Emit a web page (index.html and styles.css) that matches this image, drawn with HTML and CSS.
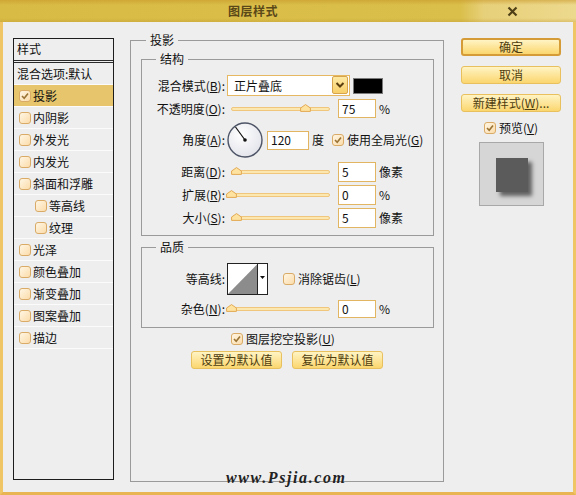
FILE: index.html
```html
<!DOCTYPE html>
<html lang="zh-CN">
<head>
<meta charset="utf-8">
<title>图层样式</title>
<link rel="stylesheet" href="styles.css">
</head>
<body>
<div class="win">
  <div class="titlebar">
    <div class="title">图层样式</div>
    <svg class="close" width="11" height="11" viewBox="0 0 11 11"><path d="M1.5 1.5 L9.5 9.5 M9.5 1.5 L1.5 9.5" stroke="#4e3f16" stroke-width="2.2" fill="none"/></svg>
  </div>
  <div class="frame">
    <div class="list">
      <div class="list-head">样式</div>
      <div class="item plain">混合选项:默认</div>
      <div class="item sel"><span class="cb on"><svg width="10" height="10" viewBox="0 0 10 10"><path d="M2 5 L4.2 7.3 L8 2.6" stroke="#9a7435" stroke-width="1.6" fill="none"/></svg></span>投影</div>
      <div class="item"><span class="cb"></span>内阴影</div>
      <div class="item"><span class="cb"></span>外发光</div>
      <div class="item"><span class="cb"></span>内发光</div>
      <div class="item"><span class="cb"></span>斜面和浮雕</div>
      <div class="item sub"><span class="cb"></span>等高线</div>
      <div class="item sub"><span class="cb"></span>纹理</div>
      <div class="item"><span class="cb"></span>光泽</div>
      <div class="item"><span class="cb"></span>颜色叠加</div>
      <div class="item"><span class="cb"></span>渐变叠加</div>
      <div class="item"><span class="cb"></span>图案叠加</div>
      <div class="item"><span class="cb"></span>描边</div>
    </div>

    <fieldset class="grp outer">
      <legend>投影</legend>
      <fieldset class="grp struct">
        <legend>结构</legend>
        <div class="row r-blend">
          <span class="lbl">混合模式(<u>B</u>):</span>
          <div class="select"><span class="sel-text">正片叠底</span><span class="sel-btn"><svg width="10" height="8" viewBox="0 0 10 8"><path d="M1.5 2 L5 5.5 L8.5 2" stroke="#5a3e10" stroke-width="2" fill="none"/></svg></span></div>
          <span class="swatch"></span>
        </div>
        <div class="row r-op">
          <span class="lbl">不透明度(<u>O</u>):</span>
          <div class="slider"><span class="track"></span><svg class="thumb" style="left:69px" width="11" height="8" viewBox="0 0 11 8"><path d="M5.5 0.6 L10.4 4 L10.4 7.4 L0.6 7.4 L0.6 4 Z" fill="#fde2a0" stroke="#e2a953"/></svg></div>
          <span class="inp">75</span><span class="unit">%</span>
        </div>
        <div class="row r-angle">
          <span class="lbl">角度(<u>A</u>):</span>
          <svg class="dial" width="36" height="36" viewBox="0 0 36 36">
            <defs><radialGradient id="dg" cx="40%" cy="35%" r="70%"><stop offset="0" stop-color="#ffffff"/><stop offset="1" stop-color="#e2e3ea"/></radialGradient></defs>
            <circle cx="18" cy="18" r="17" fill="url(#dg)" stroke="#4d5466" stroke-width="1.4"/>
            <path d="M18 18 L8.5 5" stroke="#111" stroke-width="1.2"/>
            <circle cx="18" cy="18" r="1.8" fill="#111"/>
          </svg>
          <span class="inp w42">120</span><span class="unit">度</span>
          <span class="chk gl"><span class="cb on"><svg width="10" height="10" viewBox="0 0 10 10"><path d="M2 5 L4.2 7.3 L8 2.6" stroke="#9a7435" stroke-width="1.6" fill="none"/></svg></span>使用全局光(<u>G</u>)</span>
        </div>
        <div class="row r-dist">
          <span class="lbl">距离(<u>D</u>):</span>
          <div class="slider"><span class="track"></span><svg class="thumb" style="left:0px" width="11" height="8" viewBox="0 0 11 8"><path d="M5.5 0.6 L10.4 4 L10.4 7.4 L0.6 7.4 L0.6 4 Z" fill="#fde2a0" stroke="#e2a953"/></svg></div>
          <span class="inp">5</span><span class="unit">像素</span>
        </div>
        <div class="row r-next">
          <span class="lbl">扩展(<u>R</u>):</span>
          <div class="slider"><span class="track"></span><svg class="thumb" style="left:-5px" width="11" height="8" viewBox="0 0 11 8"><path d="M5.5 0.6 L10.4 4 L10.4 7.4 L0.6 7.4 L0.6 4 Z" fill="#fde2a0" stroke="#e2a953"/></svg></div>
          <span class="inp">0</span><span class="unit">%</span>
        </div>
        <div class="row r-next">
          <span class="lbl">大小(<u>S</u>):</span>
          <div class="slider"><span class="track"></span><svg class="thumb" style="left:0px" width="11" height="8" viewBox="0 0 11 8"><path d="M5.5 0.6 L10.4 4 L10.4 7.4 L0.6 7.4 L0.6 4 Z" fill="#fde2a0" stroke="#e2a953"/></svg></div>
          <span class="inp">5</span><span class="unit">像素</span>
        </div>
      </fieldset>

      <fieldset class="grp quality">
        <legend>品质</legend>
        <div class="row r-contour">
          <span class="lbl">等高线:</span>
          <svg class="contour" width="41" height="32" viewBox="0 0 41 32">
            <rect x="0.5" y="0.5" width="40" height="31" fill="#fff" stroke="#222"/>
            <path d="M1 31 L30.5 1 L30.5 31 Z" fill="#8c8c8c"/>
            <path d="M30.5 1 L30.5 31" stroke="#222"/>
            <path d="M33 13 L38 13 L35.5 16 Z" fill="#111"/>
          </svg>
          <span class="chk aa"><span class="cb"></span>消除锯齿(<u>L</u>)</span>
        </div>
        <div class="row r-noise">
          <span class="lbl">杂色(<u>N</u>):</span>
          <div class="slider"><span class="track"></span><svg class="thumb" style="left:-5px" width="11" height="8" viewBox="0 0 11 8"><path d="M5.5 0.6 L10.4 4 L10.4 7.4 L0.6 7.4 L0.6 4 Z" fill="#fde2a0" stroke="#e2a953"/></svg></div>
          <span class="inp">0</span><span class="unit">%</span>
        </div>
      </fieldset>

      <div class="knock"><span class="chk"><span class="cb on"><svg width="10" height="10" viewBox="0 0 10 10"><path d="M2 5 L4.2 7.3 L8 2.6" stroke="#9a7435" stroke-width="1.6" fill="none"/></svg></span>图层挖空投影(<u>U</u>)</span></div>
      <div class="defbtns">
        <span class="btn wide">设置为默认值</span>
        <span class="btn wide">复位为默认值</span>
      </div>
    </fieldset>

    <div class="side">
      <span class="btn primary">确定</span>
      <span class="btn">取消</span>
      <span class="btn">新建样式(<u>W</u>)...</span>
      <div class="prev-chk"><span class="chk"><span class="cb on"><svg width="10" height="10" viewBox="0 0 10 10"><path d="M2 5 L4.2 7.3 L8 2.6" stroke="#9a7435" stroke-width="1.6" fill="none"/></svg></span>预览(<u>V</u>)</span></div>
      <div class="preview"><div class="square"></div></div>
    </div>

    <div class="watermark">www.Psjia.com</div>
  </div>
</div>
</body>
</html>
```
FILE: styles.css
```css
* { box-sizing: border-box; }
html, body { margin: 0; padding: 0; }
body {
  width: 576px; height: 495px; overflow: hidden;
  font: 12px/14px "Noto Sans CJK SC", "Liberation Sans", sans-serif;
  color: #111; background: #eeeeee;
}
u { text-decoration: underline; text-underline-offset: 1px; }

.win { width: 576px; height: 495px; display: flex; flex-direction: column; }

.titlebar {
  height: 22px; flex: none; display: flex; align-items: center;
  background:
    linear-gradient(to bottom, rgba(200,150,40,0.55) 0, rgba(220,180,60,0) 5px, rgba(0,0,0,0) 18px, rgba(190,150,50,0.35) 22px),
    linear-gradient(to right, #d8bb44 0, #dabf4b 80%, #e7d07a 84%, #edd98d 100%);
}
.title { width: 506px; text-align: center; font-weight: bold; font-size: 12px; color: #5a4819; letter-spacing: 0.5px; }
.close { margin-left: 1px; }

.frame {
  position: relative; flex: 1; display: flex; align-items: flex-start;
  background: #eeeeee;
  border-left: 3px solid #f0c566; border-right: 3px solid #f0c566; border-bottom: 3px solid #e9b452;
}

/* left list */
.list {
  margin: 16px 0 0 10px; width: 101px; height: 442px; flex: none;
  border: 1px solid #1c1c1c; background: #eeeeee;
}
.list-head { height: 24px; padding: 3px 0 0 3px; border-bottom: 3px double #2a2a2a; }
.item {
  height: 22px; display: flex; align-items: center; padding-left: 5px;
  border-bottom: 1px solid #fbfbfb; white-space: nowrap;
}
.item.plain { padding-left: 3px; }
.item.sub { padding-left: 21px; }
.item.sel { background: #e6c56c; }
.item .cb { margin-right: 2px; }

.cb {
  width: 12px; height: 12px; flex: none; display: inline-flex; align-items: center; justify-content: center;
  border: 1px solid #d9ab66; border-radius: 3px;
  background: linear-gradient(135deg, #fff6e4 0, #fbdcaa 100%);
}
.chk { display: inline-flex; align-items: center; white-space: nowrap; }
.chk .cb { margin-right: 3px; }

/* group boxes */
.grp { margin: 0; padding: 0; border: 1px solid #9a9a9a; min-width: 0; }
.grp > legend { padding: 0 4px; margin-left: 15px; line-height: 14px; }
.outer { margin: 11px 0 0 16px; width: 314px; height: 449px; flex: none; display: flex; flex-direction: column; }
.struct { margin: 5px 0 0 10px; width: 293px; height: 184px; padding-top: 9px; }
.quality { margin: 4px 0 0 10px; width: 293px; height: 88px; padding-top: 9px; }
.struct > legend, .quality > legend { margin-left: 14px; }

.row { display: flex; align-items: center; white-space: nowrap; }
.lbl { width: 83px; flex: none; text-align: right; }
.r-blend { height: 21px; }
.r-op { height: 19px; margin-top: 3px; }
.r-angle { height: 36px; margin-top: 4px; }
.r-dist { height: 20px; margin-top: 4px; }
.r-next { height: 20px; margin-top: 3px; }
.r-contour { height: 32px; }
.r-noise { height: 18px; margin-top: 5px; }

.select {
  margin-left: 2px; width: 123px; height: 21px; display: flex; align-items: stretch;
  border: 1px solid #e6b862; background: #fff;
}
.sel-text { flex: 1; padding-left: 6px; display: flex; align-items: center; font-size: 12px; }
.sel-btn {
  width: 16px; margin: 0 1px 1px 0; display: flex; align-items: center; justify-content: center;
  background: linear-gradient(#fde9a4, #f8cf6a); border: 1px solid #d6a44c; border-radius: 2px;
}
.swatch { margin-left: 3px; width: 30px; height: 16px; background: #000; border: 1px solid #7a7a7a; }

.slider { position: relative; margin-left: 6px; width: 99px; height: 10px; flex: none; }
.track {
  position: absolute; left: 0; right: 0; top: 3px; height: 4px;
  border: 1px solid #efc67c; border-radius: 2px; background: #fde7b0;
}
.thumb { position: absolute; top: 0; }

.inp {
  margin-left: 8px; width: 38px; height: 100%; flex: none;
  border: 1px solid #e2b563; background: #fff; padding-left: 3px;
  display: flex; align-items: center;
}
.inp.w42 { margin-left: 4px; width: 42px; height: 19px; }
.unit { margin-left: 3px; }
.dial { margin-left: 2px; flex: none; }
.chk.gl { margin-left: 8px; }
.contour { margin-left: 2px; flex: none; }
.chk.aa { margin-left: 15px; }

.knock { margin-top: 4px; height: 14px; display: flex; justify-content: center; padding-right: 8px; }
.defbtns { margin-top: 5px; display: flex; justify-content: center; gap: 10px; }

.btn {
  display: flex; align-items: center; justify-content: center;
  width: 100px; height: 18px; white-space: nowrap;
  border: 1px solid #e8c05e; border-radius: 3px;
  background: linear-gradient(#fff4c4, #fbd66e);
  color: #4e3d10; font-size: 12px;
}
.btn.wide { width: 91px; }
.btn.primary { border: 2px solid #d59b36; }

.side { margin: 16px 0 0 17px; width: 100px; flex: none; display: flex; flex-direction: column; gap: 10px; }
.prev-chk { margin-top: -1px; height: 14px; display: flex; justify-content: center; }
.preview {
  margin: -3px auto 0; width: 65px; height: 64px;
  border: 1px solid #a8a8a8; background: #d6d6d6; padding: 15px 0 0 16px;
}
.square { width: 32px; height: 34px; background: #5b5b5b; box-shadow: 4px 4px 4px rgba(0,0,0,0.55); }

.watermark {
  position: absolute; left: 223px; top: 446px;
  font: italic bold 16px/20px "Liberation Serif", serif; letter-spacing: 1.6px; color: #222;
}
```
